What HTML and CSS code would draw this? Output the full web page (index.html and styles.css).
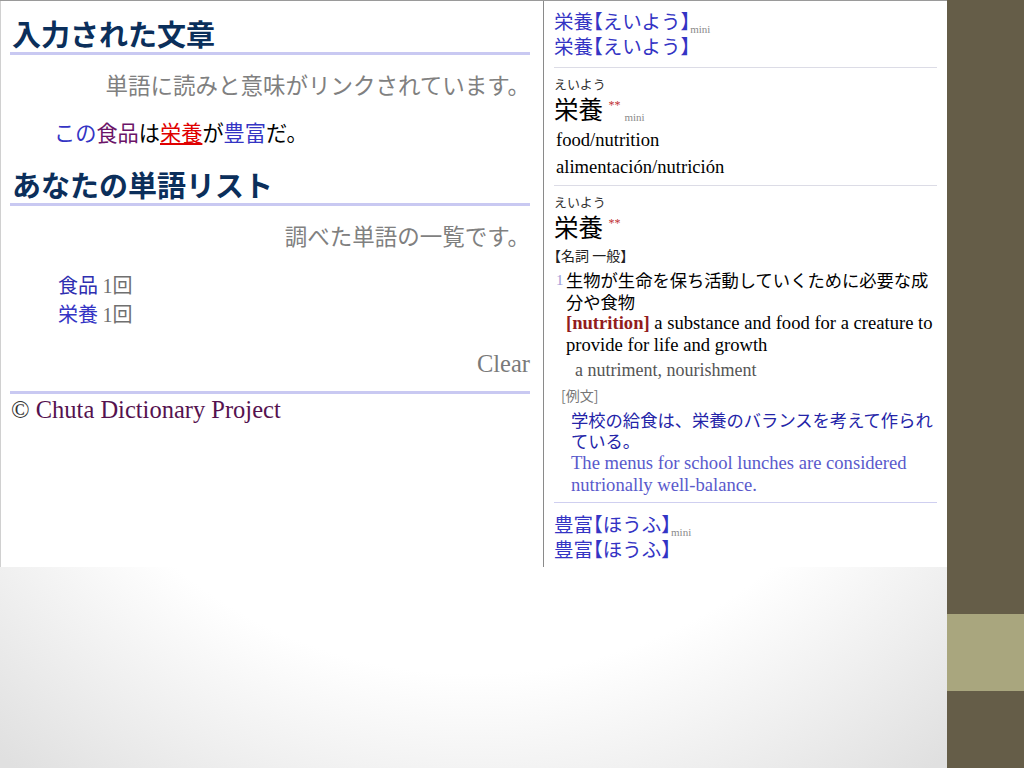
FILE: index.html
```html
<!DOCTYPE html>
<html lang="ja">
  <head>
    <meta charset="UTF-8" />
    <meta name="viewport" content="width=device-width, initial-scale=1.0" />
    <title>Chuta Dictionary</title>
    <link rel="stylesheet" href="styles.css">
  </head>
  <body>
    <div class="screen">
      <div class="slide">
        <div class="shot">
          <!-- 左側：入力された文章と単語リスト -->
          <div class="main">
            <h2 class="title">入力された文章</h2>
            <p class="note">単語に読みと意味がリンクされています。</p>
            <p class="sentence"><a class="w-link">この</a><a class="w-visited">食品</a>は<a class="w-active">栄養</a>が<a class="w-link">豊富</a>だ。</p>

            <h2 class="title">あなたの単語リスト</h2>
            <p class="note">調べた単語の一覧です。</p>
            <ul class="words">
              <li><a class="w-dark">食品</a> <span class="count">1回</span></li>
              <li><a class="w-link">栄養</a> <span class="count">1回</span></li>
            </ul>

            <div class="clear">Clear</div>
            <div class="footer">© <span class="project">Chuta Dictionary Project</span></div>
          </div>

          <!-- 右側：辞書の表示 -->
          <div class="dict">
            <div class="head-links first">
              <div><a class="w-link">栄養<span class="br">【</span>えいよう<span class="br">】</span></a><span class="mini">mini</span></div>
              <div><a class="w-link">栄養<span class="br">【</span>えいよう<span class="br">】</span></a></div>
            </div>
            <div class="sep"></div>

            <div class="entry">
              <div class="kana">えいよう</div>
              <div class="head">栄養 <span class="stars">**</span><span class="mini">mini</span></div>
              <div class="gloss">food/nutrition</div>
              <div class="gloss">alimentación/nutrición</div>
            </div>
            <div class="sep"></div>

            <div class="entry">
              <div class="kana">えいよう</div>
              <div class="head">栄養 <span class="stars">**</span></div>
              <div class="pos">【名詞 一般】</div>
              <div class="sense">
                <span class="num">1</span>
                <div class="sense-body">
                  <div class="sense-ja">生物が生命を保ち活動していくために必要な成分や食物</div>
                  <div class="sense-en"><b class="keyword">[nutrition]</b> a substance and food for a creature to provide for life and growth</div>
                  <div class="syn">a nutriment, nourishment</div>
                </div>
              </div>
              <div class="ex-label">[例文]</div>
              <div class="ex-ja">学校の給食は、栄養のバランスを考えて作られている。</div>
              <div class="ex-en">The menus for school lunches are considered nutrionally well-balance.</div>
            </div>
            <div class="sep sep-blue"></div>

            <div class="head-links">
              <div><a class="w-link">豊富<span class="br">【</span>ほうふ<span class="br">】</span></a><span class="mini">mini</span></div>
              <div><a class="w-link">豊富<span class="br">【</span>ほうふ<span class="br">】</span></a></div>
            </div>
          </div>
        </div>
      </div>

      <div class="side">
        <div class="band"></div>
      </div>
    </div>
  </body>
</html>
```

FILE: styles.css
```css
body {
  margin: 0;
  font-family: "Noto Sans CJK JP", sans-serif;
  color: #000;
  overflow: hidden;
}
.screen {
  display: flex;
  width: 1024px;
  height: 768px;
}
.slide {
  width: 947px;
  height: 768px;
  background: radial-gradient(ellipse 75% 85% at 50% 35%, #ffffff 62%, #e0e0e0 100%);
}
.side {
  flex: 1;
  background-color: #655d48;
  padding-top: 614px;
}
.band {
  height: 77px;
  background-color: #a9a67e;
}

/* スクリーンショット部分 */
.shot {
  display: flex;
  height: 567px;
  background-color: #fff;
  border-top: 1px solid #9a9a9a;
  box-sizing: border-box;
}
.main {
  width: 543px;
  box-sizing: border-box;
  border-left: 1px solid #d0d0d0;
  padding: 14px 13px 0 9px;
}
.title {
  margin: 0;
  padding-left: 2px;
  font-size: 29px;
  line-height: 37px;
  font-weight: 700;
  color: #0b2f5b;
  border-bottom: 3px solid #c9c9f2;
}
.note {
  margin: 14px 0 0;
  text-align: right;
  font-size: 22.5px;
  line-height: 30px;
  color: #808080;
}
.sentence {
  margin: 19px 0 0;
  padding-left: 44px;
  font-size: 21.2px;
  line-height: 28px;
}
.sentence + .title {
  margin-top: 20px;
}
.w-link {
  color: #3434c4;
}
.w-visited {
  color: #6b1468;
}
.w-dark {
  color: #2f2fb0;
}
.w-active {
  color: #e00000;
  text-decoration: underline;
}
.words {
  list-style: none;
  margin: 21px 0 0;
  padding-left: 48px;
  font-size: 20px;
  line-height: 28px;
}
.count {
  font-family: "Liberation Serif", "Noto Sans CJK JP", serif;
  color: #707070;
}
.clear {
  margin-top: 20px;
  text-align: right;
  font-family: "Liberation Serif", serif;
  font-size: 24.5px;
  line-height: 30px;
  color: #7a7a7a;
  border-bottom: 3px solid #c9c9f2;
  padding-bottom: 12px;
}
.footer {
  padding-left: 1px;
  padding-top: 2px;
  font-family: "Liberation Serif", serif;
  font-size: 24.5px;
  line-height: 28px;
  color: #333;
}
.project {
  color: #55124f;
}

/* 辞書パネル */
.dict {
  flex: 1;
  border-left: 1px solid #8a8a8a;
  padding: 7px 7px 0 10px;
}
.head-links {
  font-size: 19.5px;
  line-height: 25px;
}
.head-links.first {
  padding-bottom: 4px;
}
.br {
  font-feature-settings: "halt";
}
.mini {
  position: relative;
  top: 4px;
  font-family: "Liberation Serif", serif;
  font-size: 11px;
  line-height: 1;
  color: #8a8a8a;
}
.sep {
  height: 1px;
  background-color: #dcdce6;
  margin: 5px 3px 0 0;
}
.sep-blue {
  background-color: #cfcff0;
  margin-top: 6px;
}
.entry {
  padding-top: 7px;
}
.kana {
  font-size: 13px;
  line-height: 18px;
  color: #333;
}
.head {
  font-size: 24.5px;
  line-height: 32px;
}
.stars {
  position: relative;
  top: -10px;
  font-family: "Liberation Serif", serif;
  font-size: 12px;
  line-height: 1;
  color: #c03030;
}
.head .mini {
  top: 2px;
  margin-left: 4px;
}
.gloss {
  padding-left: 2px;
  font-family: "Liberation Serif", serif;
  font-size: 18.6px;
  line-height: 27px;
}
.head + .gloss {
  margin-top: 1px;
}
.pos {
  margin-top: 3px;
  font-size: 14px;
  line-height: 18px;
  color: #222;
  font-feature-settings: "halt";
}
.sense {
  display: flex;
  margin-top: 5px;
}
.num {
  width: 10px;
  padding-left: 2px;
  font-family: "Liberation Serif", serif;
  font-size: 15px;
  line-height: 22px;
  color: #9c9cd8;
}
.sense-body {
  flex: 1;
}
.sense-ja {
  font-size: 17.3px;
  line-height: 22px;
}
.sense-en {
  margin-top: -1px;
  font-family: "Liberation Serif", serif;
  font-size: 18.6px;
  line-height: 22px;
}
.keyword {
  color: #921c1c;
}
.syn {
  margin-top: 3px;
  padding-left: 9px;
  font-family: "Liberation Serif", serif;
  font-size: 18px;
  line-height: 22px;
  color: #555;
}
.ex-label {
  margin-top: 4px;
  padding-left: 7px;
  font-size: 14px;
  line-height: 20px;
  color: #777;
}
.ex-ja {
  margin-top: 4px;
  padding-left: 17px;
  font-size: 17.3px;
  line-height: 21px;
  color: #2424a8;
}
.ex-en {
  margin-top: 1px;
  padding-left: 17px;
  font-family: "Liberation Serif", serif;
  font-size: 18.6px;
  line-height: 22px;
  color: #5a5acc;
}
.sep-blue + .head-links {
  margin-top: 8px;
}
```
